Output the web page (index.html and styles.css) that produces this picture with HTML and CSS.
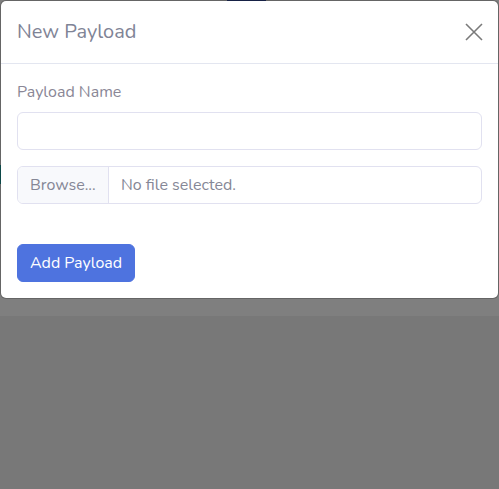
FILE: index.html
```html
<!DOCTYPE html>
<html lang="en">
<head>
<meta charset="utf-8">
<title>New Payload</title>
<link rel="stylesheet" href="styles.css">
</head>
<body>
<div class="page">
  <span class="peek peek-top"></span>
  <span class="peek peek-left"></span>
  <div class="backdrop-lower"></div>
</div>
<div class="modal">
  <div class="modal-header">
    <h5 class="modal-title">New Payload</h5>
    <button class="close" type="button" aria-label="Close">
      <svg width="18" height="18" viewBox="0 0 18 18"><path d="M1 1 L17 17 M17 1 L1 17" stroke="#7a7a7a" stroke-width="1.6" fill="none"/></svg>
    </button>
  </div>
  <div class="modal-body">
    <div class="form-group">
      <label class="label">Payload Name</label>
      <input class="form-control" type="text">
    </div>
    <div class="form-group file">
      <span class="file-btn">Browse...</span>
      <span class="file-name">No file selected.</span>
    </div>
    <button class="btn-primary" type="button">Add Payload</button>
  </div>
</div>
</body>
</html>
```
FILE: styles.css
```css
html, body {
  margin: 0;
  padding: 0;
}
body {
  background: #7f7f7f;
  font-family: "Nunito", "Lato", "Open Sans", sans-serif;
  color: #858796;
  width: 499px;
  height: 489px;
  overflow: hidden;
  position: relative;
}
.page {
  position: absolute;
  inset: 0;
}
.backdrop-lower {
  position: absolute;
  left: 0;
  right: 0;
  top: 316px;
  bottom: 0;
  background: #787878;
}
.peek {
  position: absolute;
  display: block;
}
.peek-top {
  left: 227px;
  top: 0;
  width: 39px;
  height: 2px;
  background: #1c2a57;
}
.peek-left {
  left: 0;
  top: 165px;
  width: 2px;
  height: 19px;
  background: #0f5a5a;
}
.modal {
  position: absolute;
  left: 0;
  top: 0;
  width: 497px;
  background: #fff;
  border: 1px solid rgba(0, 0, 0, 0.2);
  border-radius: 6px;
  background-clip: padding-box;
}
.modal-header {
  display: flex;
  align-items: center;
  justify-content: space-between;
  padding: 16px;
  border-bottom: 1px solid #e3e6f0;
}
.modal-title {
  margin: 0;
  font-size: 20px;
  line-height: 30px;
  font-weight: 400;
  color: #7f8496;
}
.close {
  border: 0;
  background: none;
  padding: 0;
  margin-right: -1px;
  width: 18px;
  height: 18px;
  display: flex;
}
.modal-body {
  padding: 16px;
}
.form-group {
  margin-bottom: 16px;
}
.label {
  display: block;
  font-size: 16px;
  line-height: 24px;
  margin-bottom: 8px;
  color: #8a8796;
}
.form-control {
  display: block;
  box-sizing: border-box;
  width: 100%;
  height: 38px;
  border: 1px solid #e1e1f0;
  border-radius: 6px;
  padding: 6px 12px;
  font: inherit;
  outline: none;
}
.file {
  display: flex;
  box-sizing: border-box;
  height: 38px;
  border: 1px solid #e1e1f0;
  border-radius: 6px;
  overflow: hidden;
  font-size: 16px;
  line-height: 24px;
}
.file-btn {
  background: #f8f9fc;
  border-right: 1px solid #e1e1f0;
  padding: 6px 12px;
  width: 66px;
  color: #858796;
}
.file-name {
  padding: 6px 12px;
  color: #858796;
}
.btn-primary {
  margin-top: 40px;
  display: block;
  height: 38px;
  padding: 6px 12px;
  font: inherit;
  font-size: 16px;
  line-height: 24px;
  color: #fff;
  background: #4e73df;
  border: 1px solid #4e73df;
  border-radius: 6px;
}
```
